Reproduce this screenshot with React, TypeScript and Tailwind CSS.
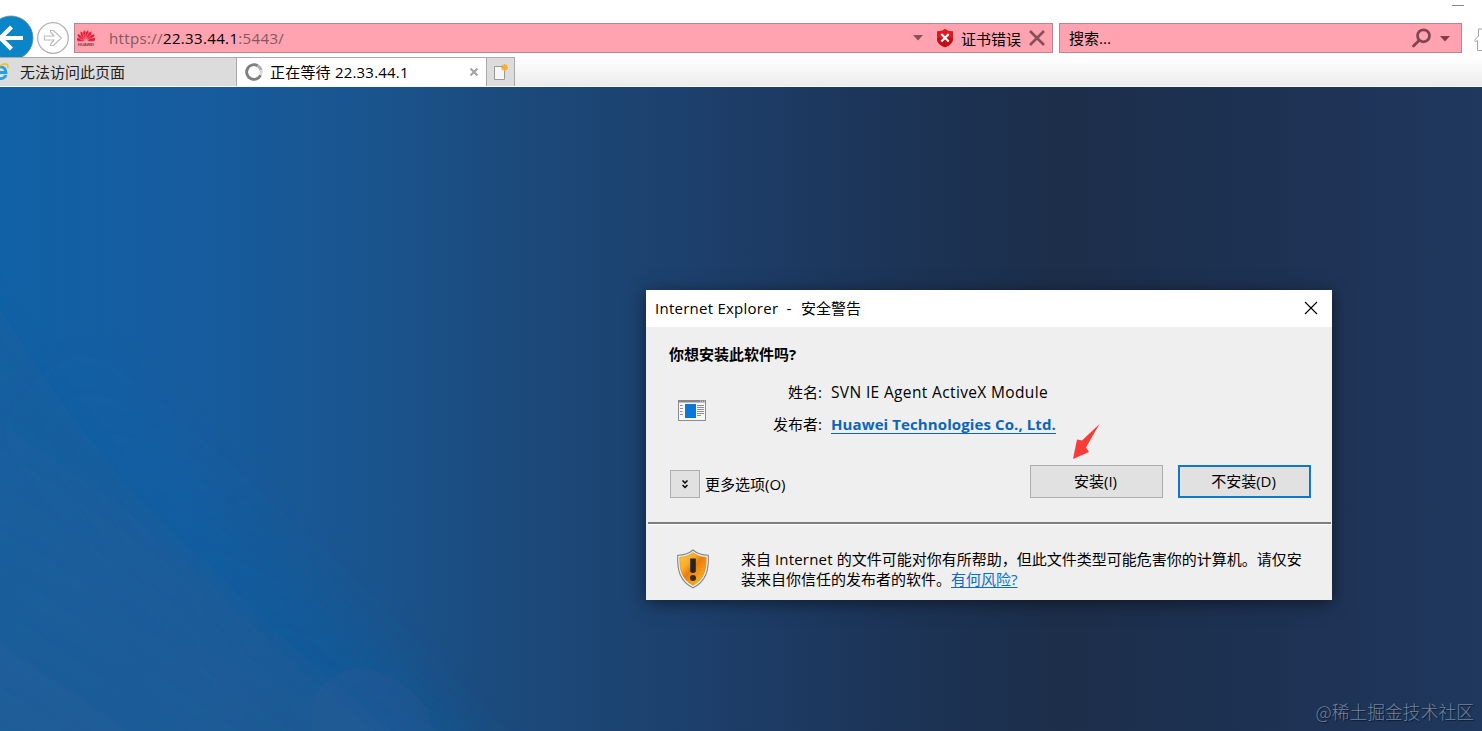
import type { ReactNode } from "react";

function BackIcon() {
  return (
    <svg width="34" height="43" viewBox="0 0 34 43" className="shrink-0">
      <circle cx="11" cy="23" r="22" fill="#0a86c8" stroke="#6d8594" strokeWidth="0.8" />
      <path d="M0.5 23H23M11.500 12L0.500 23L11.500 34" fill="none" stroke="#fff" strokeWidth="4.200" />
    </svg>
  );
}

function ForwardIcon() {
  return (
    <svg width="34" height="34" viewBox="0 0 34 34" className="shrink-0">
      <circle cx="17" cy="17" r="15.300" fill="#fff" stroke="#b4b4b4" strokeWidth="1.300" />
      <path d="M8.500 15H18L14.500 11V9.500H17.500L25.500 17L17.500 24.500H14.500V23L18 19H8.500Z" fill="#fff" stroke="#bcbcbc" strokeWidth="1.200" />
    </svg>
  );
}

function HuaweiIcon() {
  const petals = [-80, -54, -30, -10, 10, 30, 54, 80];
  return (
    <svg width="18" height="18" viewBox="0 0 18 18" className="shrink-0">
      {petals.map((a) => (
        <path key={a} d="M9 11.600C6.600 8 6.500 4 9 1.600C11.500 4 11.400 8 9 11.600Z" fill="#e4203c" stroke="#ffa3b0" strokeWidth="0.500" transform={`rotate(${a} 9 11.8) translate(0 -0.8)`} />
      ))}
      <text x="1" y="17" fontSize="4" fontWeight="700" textLength="16" fill="#7a3440" fontFamily="Liberation Sans, sans-serif">HUAWEI</text>
    </svg>
  );
}

function CertShield() {
  return (
    <svg width="18" height="20" viewBox="0 0 18 20" className="shrink-0">
      <path d="M9 0.800C11 2.600 13.800 3.400 17 3.300V10C17 14.600 14 17.600 9 19.200C4 17.600 1 14.600 1 10V3.300C4.200 3.400 7 2.600 9 0.800Z" fill="#dc1a20" />
      <path d="M9 19.200C4 17.600 1 14.600 1 10L17 10C17 14.600 14 17.600 9 19.200Z" fill="#c01016" />
      <path d="M5.300 6L12.700 13.500M12.700 6L5.300 13.500" stroke="#fff" strokeWidth="2.100" />
    </svg>
  );
}

function WarningShield() {
  return (
    <svg width="34" height="40" viewBox="0 0 34 40" className="shrink-0">
      <defs>
        <linearGradient id="amber" x1="0" y1="0" x2="0.9" y2="1">
          <stop offset="0" stopColor="#ffc94a" />
          <stop offset="0.35" stopColor="#f9a827" />
          <stop offset="0.5" stopColor="#ea7d0a" />
          <stop offset="1" stopColor="#fbc02e" />
        </linearGradient>
      </defs>
      <path d="M17 1C20.500 4.200 25.500 6 32.300 6.200C33 21 30 32.500 17 38.700C4 32.500 1 21 1.700 6.200C8.500 6 13.500 4.200 17 1Z" fill="#f0f0f0" stroke="#858585" strokeWidth="1.100" />
      <path d="M17 3.700C20.500 6.400 25 8 30.200 8.300C30.500 21 28 30.500 17 36.300C6 30.500 3.500 21 3.800 8.300C9 8 13.500 6.400 17 3.700Z" fill="url(#amber)" stroke="#d98a10" strokeWidth="0.600" />
      <path d="M14.200 9.500H19.800V22.500Q17 25.500 14.200 22.500Z" fill="#242424" />
      <circle cx="17" cy="29" r="3" fill="#3a2c12" />
    </svg>
  );
}

function InstallerIcon() {
  return (
    <svg width="28" height="21" viewBox="0 0 28 21" className="shrink-0">
      <rect x="0.5" y="0.5" width="27" height="20" fill="#f7f7f7" stroke="#8b8b90" />
      <rect x="0" y="0" width="28" height="2.500" fill="#85858a" />
      <path d="M22 1.200H23M24 1.200H25M26 1.200H27" stroke="#fff" strokeWidth="0.800" />
      <rect x="7" y="4" width="11" height="14" fill="#0a78d6" />
      <path d="M2 5.500H4.500M2 8.500H5M2 11.500H4.500M2 14.500H5M19 5.500H26M19 7.500H26M19 9.500H26M19 11.500H26M19 13.500H26M19 15.500H23" stroke="#8f8f94" />
    </svg>
  );
}

function AddressBar() {
  return (
    <div className="flex h-[57px] items-start">
      <div className="flex w-[74px] shrink-0 items-start pt-[15px]">
        <BackIcon />
        <div className="ml-[2px] mt-[6px]">
          <ForwardIcon />
        </div>
      </div>
      <div className="mt-[23px] flex h-[30px] w-[979px] shrink-0 items-center border-[1.5px] border-[#b98690] bg-[#ffa3b0] pl-[2px]">
        <HuaweiIcon />
        <span className="ml-[14px] w-[176px] whitespace-nowrap text-[15px] tracking-[0.35px] text-[#80595f]">
          https://<span className="text-black">22.33.44.1</span>:5443/
        </span>
        <svg width="10" height="6" className="ml-[628px] shrink-0"><path d="M0 0H10L5 5.500Z" fill="#8a4f59" /></svg>
        <div className="ml-[13px] flex"><CertShield /></div>
        <span className="ml-[7px] mt-[2px] w-[60px] whitespace-nowrap text-[15px]">证书错误</span>
        <svg width="16" height="16" viewBox="0 0 16 16" className="ml-[8px] shrink-0"><path d="M1 1L15 15M15 1L1 15" stroke="#845158" strokeWidth="2.600" /></svg>
      </div>
      <div className="ml-[6px] mt-[23px] flex h-[30px] w-[403px] shrink-0 items-center border-[1.5px] border-[#b98690] bg-[#ffa3b0] pl-[9px]">
        <span className="w-[342px] text-[15px]">搜索...</span>
        <svg width="20" height="20" viewBox="0 0 20 20" className="shrink-0"><circle cx="12.500" cy="7.800" r="6" fill="none" stroke="#80464f" strokeWidth="2.700" /><path d="M8 12.500L2.500 18" stroke="#80464f" strokeWidth="2.800" strokeLinecap="round" /></svg>
        <svg width="10" height="6" className="ml-[9px] mt-[2px] shrink-0"><path d="M0 0H10L5 5.500Z" fill="#8a3a48" /></svg>
      </div>
      <div className="flex w-5 shrink-0 flex-col">
        <div className="ml-[-10px] mt-[5px] h-px w-3 bg-[#888]" />
        <svg width="10" height="24" viewBox="0 0 10 24" className="ml-[11px] mt-[22px]"><path d="M10 1H5.500V8L1.500 12.200L2.500 13.500L4.500 12.500V22.500H10" fill="none" stroke="#a4a4a4" /></svg>
      </div>
    </div>
  );
}

function TabStrip() {
  return (
    <div className="flex h-[30px] items-start border-b border-[#f7fafc] bg-linear-to-b from-[#ffffff] to-[#ececec]">
      <div className="flex h-[29px] w-[237px] shrink-0 items-center border-r border-t border-[#a9a9a9] bg-[#dcdcdc]">
        <svg width="10" height="18" viewBox="0 0 10 18" className="shrink-0">
          <path d="M-5 9.500H6C5.700 1.500 -5 2.500 -5 10C-5 17 4 17 6 12" fill="none" stroke="#2a9fe0" strokeWidth="2.800" />
          <path d="M0 3C4 0 9 0 7.500 5" fill="none" stroke="#efc02e" strokeWidth="1.800" />
        </svg>
        <span className="ml-[10px] text-[15px] text-[#222]">无法访问此页面</span>
      </div>
      <div className="flex h-[29px] w-[249px] shrink-0 items-center border-t border-[#a9a9a9] bg-white pl-[8px]">
        <svg width="18" height="18" viewBox="0 0 18 18" className="shrink-0">
          <circle cx="9" cy="9" r="7.300" fill="none" stroke="#d8d8d8" strokeWidth="2.800" />
          <path d="M15.500 12.300A7.300 7.300 0 1 1 12.600 2.700" fill="none" stroke="#808080" strokeWidth="2.800" />
          <path d="M12.600 2.700A7.300 7.300 0 0 1 16 7" fill="none" stroke="#b0b0b0" strokeWidth="2.800" />
        </svg>
        <span className="ml-[7px] w-[200px] whitespace-nowrap text-[15px] tracking-[0.2px]">正在等待 22.33.44.1</span>
        <svg width="8" height="8" viewBox="0 0 8 8" className="shrink-0"><path d="M0.500 0.500L7.500 7.500M7.500 0.500L0.500 7.500" stroke="#a3a3a3" strokeWidth="2" /></svg>
      </div>
      <div className="flex h-[29px] w-[29px] shrink-0 items-center justify-center border border-b-0 border-[#a9a9a9] bg-[#dcdcdc]">
        <svg width="16" height="17" viewBox="0 0 16 17">
          <path d="M1.500 2.500H11.500V15.500H1.500Z" fill="#f6f6f6" stroke="#999" />
          <path d="M11.500 0V7M8 3.500H15M9 1L14 6M14 1L9 6" stroke="#f4ab35" strokeWidth="1.500" />
        </svg>
      </div>
    </div>
  );
}

function DialogButton({ primary = false, children }: { primary?: boolean; children: ReactNode }) {
  return (
    <button
      className={
        primary
          ? "h-[33px] w-[133px] border-2 border-[#0c79cb] bg-[#e1e1e1] pr-[2px] text-[15px] leading-[27px]"
          : "h-[33px] w-[133px] border border-[#adadad] bg-[#e1e1e1] pr-[2px] text-[15px] leading-[29px]"
      }
    >
      {children}
    </button>
  );
}

function SecurityDialog() {
  return (
    <div className="relative flex h-[310px] w-[686px] flex-col bg-[#efefef] shadow-[0_3px_16px_rgba(0,0,0,0.5)]">
      <div className="flex h-[37px] shrink-0 items-center justify-between bg-white pl-[9px] pr-[14px]">
        <span className="flex whitespace-pre text-[15px]">
          <span className="w-[146px] tracking-[0.25px]">Internet Explorer  -  </span>
          <span>安全警告</span>
        </span>
        <svg width="14" height="14" viewBox="0 0 14 14" className="mb-px"><path d="M1 1L13 13M13 1L1 13" stroke="#000" strokeWidth="1.100" /></svg>
      </div>
      <div className="h-[48px] pl-[23px] pt-[16px] text-[15px] font-bold leading-[22px]">你想安装此软件吗?</div>
      <div className="flex h-[70px] shrink-0">
        <div className="w-[122px] shrink-0 pl-[32px] pt-[25px]"><InstallerIcon /></div>
        <div className="flex w-[54px] shrink-0 flex-col items-end pt-px text-[15px] leading-[32px]">
          <span className="whitespace-nowrap">姓名:</span>
          <span className="whitespace-nowrap">发布者:</span>
        </div>
        <div className="ml-[9px] flex flex-col items-start pt-px text-[15px] leading-[32px]">
          <span className="whitespace-nowrap text-[15.500px] tracking-[0.360px]">SVN IE Agent ActiveX Module</span>
          <span className="mt-[6px] h-[20px] whitespace-nowrap border-b border-[#0a66b8] text-[15px] font-bold leading-[20px] tracking-[0.100px] text-[#0a66bc]">Huawei Technologies Co., Ltd.</span>
        </div>
      </div>
      <div className="flex h-[77px] shrink-0 items-start pl-[24px] pt-[20px]">
        <button className="mt-[5px] flex h-[28px] w-[30px] shrink-0 items-center justify-center border border-[#adadad] bg-[#e1e1e1]">
          <svg width="6" height="9" viewBox="0 0 6 9"><path d="M0.500 0.500L3 3L5.500 0.500M0.500 5L3 7.500L5.500 5" fill="none" stroke="#000" strokeWidth="1.500" /></svg>
        </button>
        <span className="ml-[5px] mt-[8px] w-[325px] text-[15px] leading-[22px]">更多选项(O)</span>
        <DialogButton>安装(I)</DialogButton>
        <div className="w-[15px]" />
        <DialogButton primary>不安装(D)</DialogButton>
      </div>
      <div className="ml-[2px] mr-px h-[3px] shrink-0 border-b border-t-2 border-b-white border-t-[#7d7d7d]" />
      <div className="flex items-start pl-[30px] pt-[24px]">
        <WarningShield />
        <p className="ml-[31px] whitespace-nowrap text-[15px] leading-[20px]">
          来自 <span className="tracking-[0.200px]">Internet</span> 的文件可能对你有所帮助，但此文件类型可能危害你的计算机。请仅安
          <br />
          装来自你信任的发布者的软件。<a className="text-[#0a6cc8] underline underline-offset-2">有何风险?</a>
        </p>
      </div>
      <svg width="28" height="37" viewBox="0 0 28 37" className="absolute left-[426px] top-[133px]">
        <path d="M27.500 1L10 17.500L5 16.500L1 36L17 29L14 24.500Z" fill="#fb3b38" />
      </svg>
    </div>
  );
}

export default function App() {
  return (
    <div lang="zh-CN" className="h-[731px] w-[1482px] overflow-hidden bg-white font-['Open_Sans','Noto_Sans_CJK_SC',sans-serif] text-black">
      <AddressBar />
      <TabStrip />
      <main className="relative h-[644px] bg-[linear-gradient(90deg,#1161a6_0px,#165c9e_200px,#1a548d_380px,#1b4a7b_510px,#1d3f6b_700px,#1c3559_870px,#1c2e4a_1060px,#1d3152_1250px,#20385e_1482px)] pl-[646px] pt-[203px]">
        <svg width="700" height="644" viewBox="0 0 700 644" className="absolute left-0 top-0">
          <defs>
            <linearGradient id="haze" gradientUnits="userSpaceOnUse" x1="170" y1="400" x2="0" y2="644">
              <stop offset="0" stopColor="#265a8e" stopOpacity="0.25" />
              <stop offset="1" stopColor="#265a8e" stopOpacity="0.6" />
            </linearGradient>
            <linearGradient id="beam" x1="0" y1="0" x2="1" y2="1">
              <stop offset="0" stopColor="#1260a5" stopOpacity="0" />
              <stop offset="1" stopColor="#1260a5" stopOpacity="0.45" />
            </linearGradient>
            <filter id="soft" x="-30%" y="-30%" width="160%" height="160%"><feGaussianBlur stdDeviation="10" /></filter>
            <filter id="softer" x="-50%" y="-50%" width="200%" height="200%"><feGaussianBlur stdDeviation="26" /></filter>
          </defs>
          <path d="M80 260C220 420 350 530 520 720H360C250 570 150 480 0 340Z" fill="url(#beam)" filter="url(#softer)" />
          <path d="M-40 150C80 380 220 510 450 700H-40Z" fill="url(#haze)" filter="url(#soft)" />
        </svg>
        <SecurityDialog />
        <div className="absolute bottom-[5px] right-[8px] whitespace-nowrap font-['Noto_Sans_CJK_SC',sans-serif] text-[17.800px] font-light leading-[29px] text-[#7083a0] [text-shadow:1px_1px_1px_#0d1828]">@稀土掘金技术社区</div>
      </main>
    </div>
  );
}
